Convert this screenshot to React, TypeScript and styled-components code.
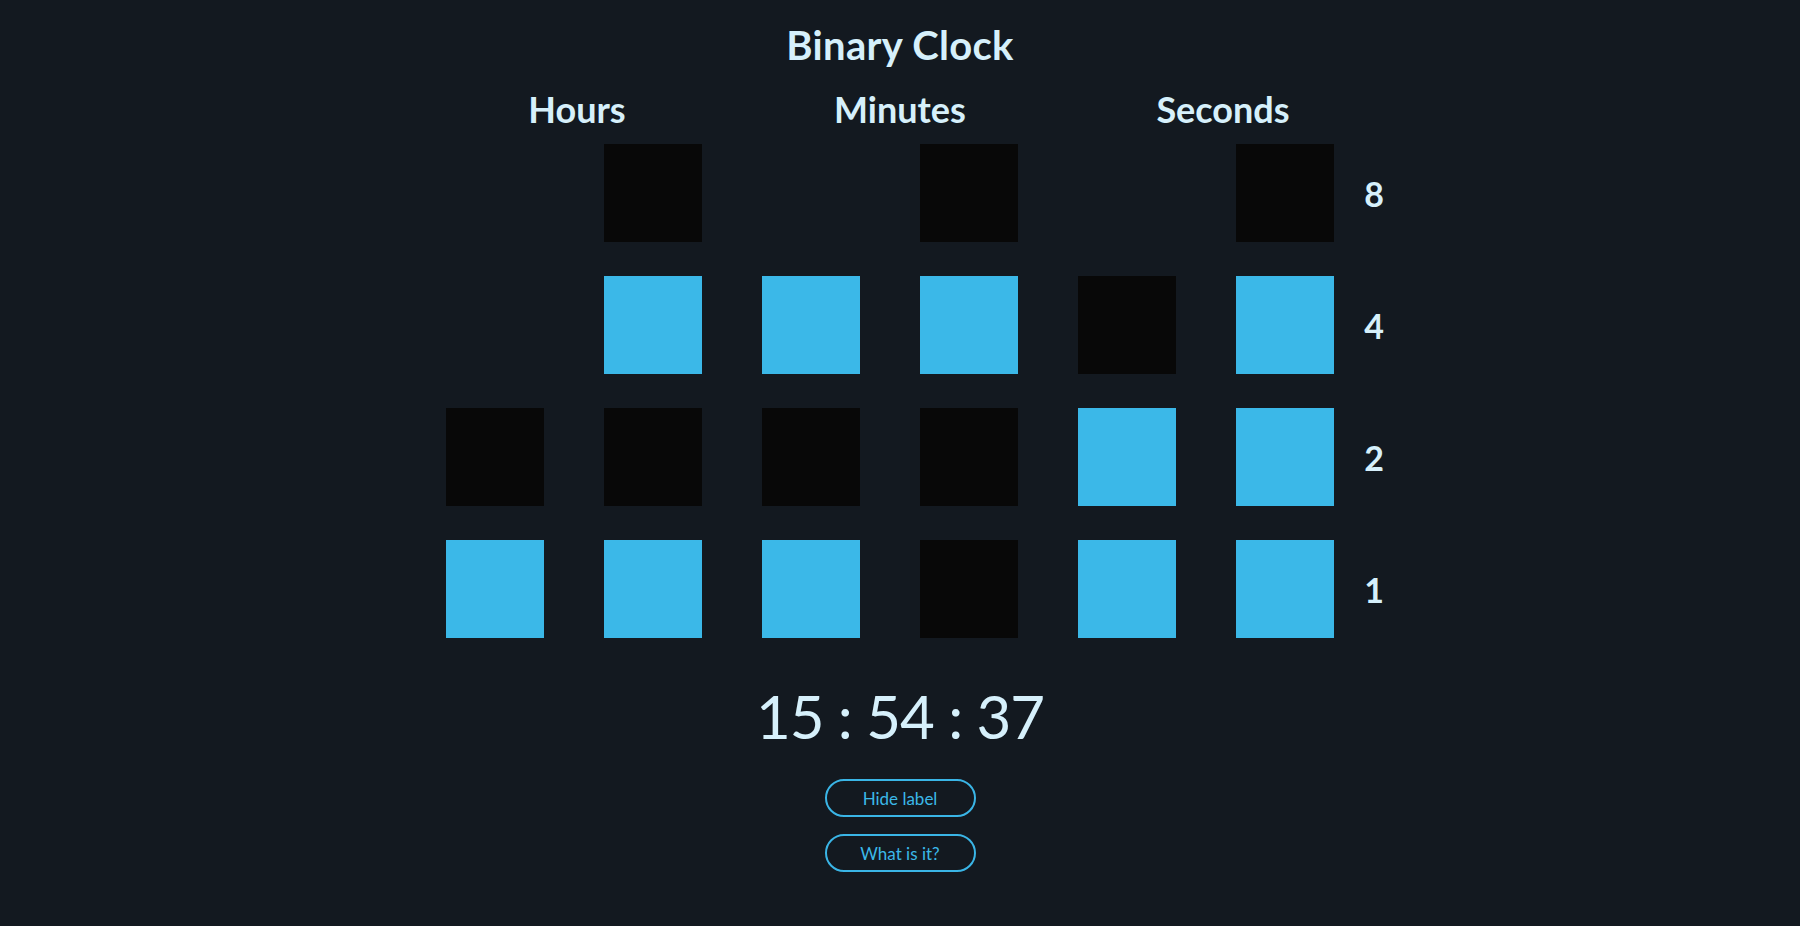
import React from "react";
import styled, { createGlobalStyle } from "styled-components";

const Global = createGlobalStyle`
  html, body {
    margin: 0;
    padding: 0;
    background: #131920;
  }
  body {
    font-family: Lato, "Open Sans", sans-serif;
    color: #d6f0fb;
  }
`;

const Page = styled.main`
  min-height: 926px;
  display: flex;
  flex-direction: column;
  align-items: center;
  background: #131920;
`;

const Title = styled.h1`
  margin: 22px 0 0;
  font-size: 40px;
  line-height: 46px;
  font-weight: 700;
  letter-spacing: 0.3px;
  color: #d6f0fb;
`;

const HeaderRow = styled.div`
  display: grid;
  grid-template-columns: repeat(3, 323px);
  margin-top: 19px;
`;

const Header = styled.h2`
  margin: 0;
  text-align: center;
  font-size: 36px;
  line-height: 44px;
  font-weight: 700;
  color: #d6f0fb;
`;

const Board = styled.div`
  display: flex;
  padding-left: 40px;
  margin-top: 13px;
`;

const Grid = styled.div`
  display: grid;
  grid-template-columns: repeat(6, 98px);
  grid-auto-flow: column;
  grid-template-rows: repeat(4, 98px);
  column-gap: 60px;
  row-gap: 34px;
`;

const Cell = styled.div<{ $state: "on" | "off" | "empty" }>`
  width: 98px;
  height: 98px;
  background: ${(p) =>
    p.$state === "on" ? "#3bb8e8" : p.$state === "off" ? "#080808" : "transparent"};
`;

const Labels = styled.div`
  display: grid;
  grid-template-rows: repeat(4, 98px);
  row-gap: 34px;
  width: 40px;
  margin-left: 20px;
`;

const Label = styled.div`
  display: flex;
  align-items: center;
  justify-content: center;
  font-size: 34px;
  font-weight: 700;
  color: #d6f0fb;
`;

const Time = styled.div`
  margin-top: 42px;
  font-size: 60px;
  line-height: 72px;
  font-weight: 400;
  letter-spacing: -1px;
  color: #d6f0fb;
  white-space: pre;
`;

const Buttons = styled.div`
  display: flex;
  flex-direction: column;
  align-items: center;
  gap: 17px;
  margin-top: 27px;
`;

const PillButton = styled.button`
  width: 151px;
  height: 38px;
  border: 2px solid #3ab5e6;
  border-radius: 20px;
  background: transparent;
  color: #3bb8e8;
  font-family: Lato, "Open Sans", sans-serif;
  font-size: 17px;
  cursor: pointer;
  padding: 0;
`;

type Bit = "on" | "off" | "empty";

function column(value: number, bits: number): Bit[] {
  return [8, 4, 2, 1].map((w, i) => {
    if (i < 4 - bits) return "empty";
    return value & w ? "on" : "off";
  });
}

export default function App() {
  const h = 15, m = 54, s = 37;
  const cols: Bit[][] = [
    column(Math.floor(h / 10), 2),
    column(h % 10, 4),
    column(Math.floor(m / 10), 3),
    column(m % 10, 4),
    column(Math.floor(s / 10), 3),
    column(s % 10, 4),
  ];
  return (
    <Page>
      <Global />
      <Title>Binary Clock</Title>
      <HeaderRow>
        <Header>Hours</Header>
        <Header>Minutes</Header>
        <Header>Seconds</Header>
      </HeaderRow>
      <Board>
        <Grid>
          {cols.flatMap((c, ci) => c.map((b, bi) => <Cell key={`${ci}-${bi}`} $state={b} />))}
        </Grid>
        <Labels>
          {[8, 4, 2, 1].map((n) => (
            <Label key={n}>{n}</Label>
          ))}
        </Labels>
      </Board>
      <Time>{"15 : 54 : 37"}</Time>
      <Buttons>
        <PillButton>Hide label</PillButton>
        <PillButton>What is it?</PillButton>
      </Buttons>
    </Page>
  );
}
